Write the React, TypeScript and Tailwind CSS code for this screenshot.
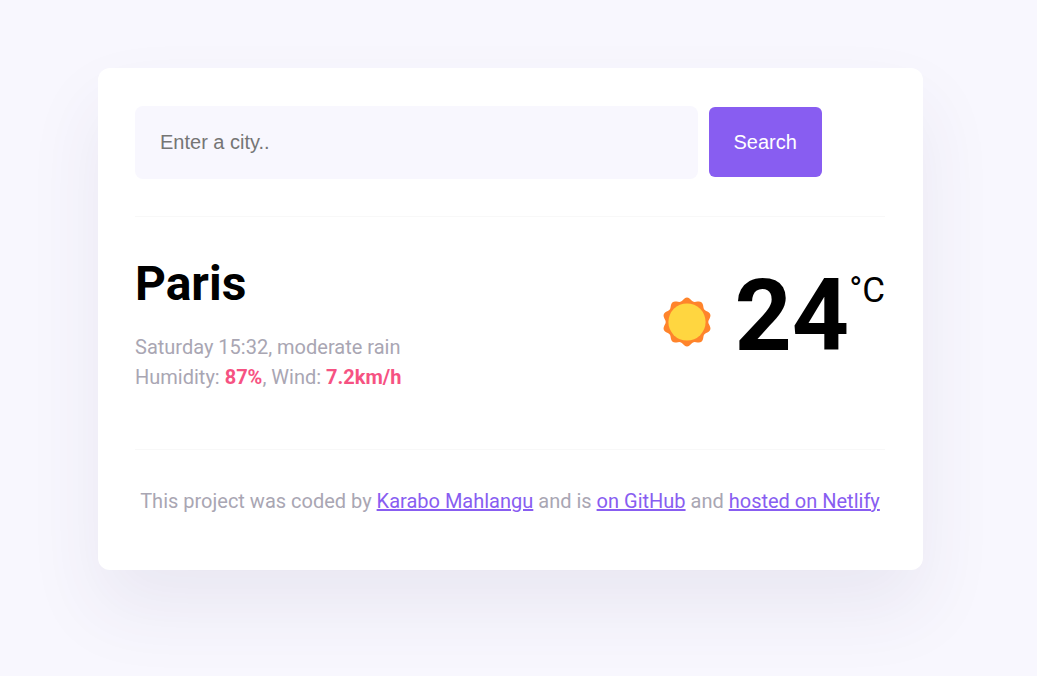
import React from "react";

const sunPath =
  Array.from({ length: 120 }, (_, i) => {
    const angle = (i / 120) * Math.PI * 2;
    const radius = 22.9 + 1.6 * Math.cos(10 * angle);
    const x = 25 + radius * Math.sin(angle);
    const y = 25 - radius * Math.cos(angle);
    return `${i === 0 ? "M" : "L"}${x.toFixed(2)} ${y.toFixed(2)}`;
  }).join("") + "Z";

function SunIcon() {
  return (
    <svg viewBox="0 0 50 50" className="size-[50px]" role="img" aria-label="Sunny">
      <path d={sunPath} fill="#ff842b" />
      <circle cx="25" cy="25" r="18.6" fill="#ffd640" />
    </svg>
  );
}

function FooterLink({ href, children }: { href: string; children: React.ReactNode }) {
  return (
    <a href={href} className="text-[#885df1] underline">
      {children}
    </a>
  );
}

export default function App() {
  return (
    <div className="min-h-screen bg-[#f8f7fe] pt-17 pr-4 pb-26 font-['Roboto',sans-serif]">
      <main className="mx-auto max-w-[825px] rounded-xl bg-white pr-[38px] pl-[37px] shadow-[0_38px_75px_rgba(65,50,100,0.08)]">
        <header className="border-b border-[#f8f8f8] pt-[38px] pb-[37px]">
          <form className="flex items-start gap-[11px]" onSubmit={(e) => e.preventDefault()}>
            <input
              type="search"
              required
              aria-label="City"
              placeholder="Enter a city.."
              className="h-[73px] w-3/4 rounded-lg bg-[#f8f7fe] px-[25px] font-['Liberation_Sans',Arial,sans-serif] text-xl outline-none placeholder:text-[#757575]"
            />
            <button
              type="submit"
              className="mt-px h-[70px] rounded-md bg-[#885df1] px-[25px] font-['Liberation_Sans',Arial,sans-serif] text-xl text-white"
            >
              Search
            </button>
          </form>
        </header>

        <section className="flex justify-between border-b border-[#f8f8f8] pt-[38px] pb-[57px]">
          <div>
            <h1 className="text-5xl leading-[58px] font-bold text-black">Paris</h1>
            <p className="mt-[19px] text-xl leading-[30px] text-[#a9a6b3]">
              Saturday 15:32, moderate rain
              <br />
              Humidity: <strong className="font-bold text-[#f65282]">87%</strong>, Wind:{" "}
              <strong className="font-bold text-[#f65282]">7.2km/h</strong>
            </p>
          </div>
          <div className="flex items-start text-black">
            <div className="mr-[22px] pt-[42px]">
              <SunIcon />
            </div>
            <div className="text-[100px] leading-[122px] font-bold">24</div>
            <div className="pt-[15px] text-[35px] leading-[42px]">°C</div>
          </div>
        </section>

        <footer className="pt-9 pb-[54px] text-center text-xl leading-[30px] text-[#a9a6b3]">
          This project was coded by <FooterLink href="#author">Karabo Mahlangu</FooterLink> and is{" "}
          <FooterLink href="#github">on GitHub</FooterLink> and{" "}
          <FooterLink href="#netlify">hosted on Netlify</FooterLink>
        </footer>
      </main>
    </div>
  );
}
